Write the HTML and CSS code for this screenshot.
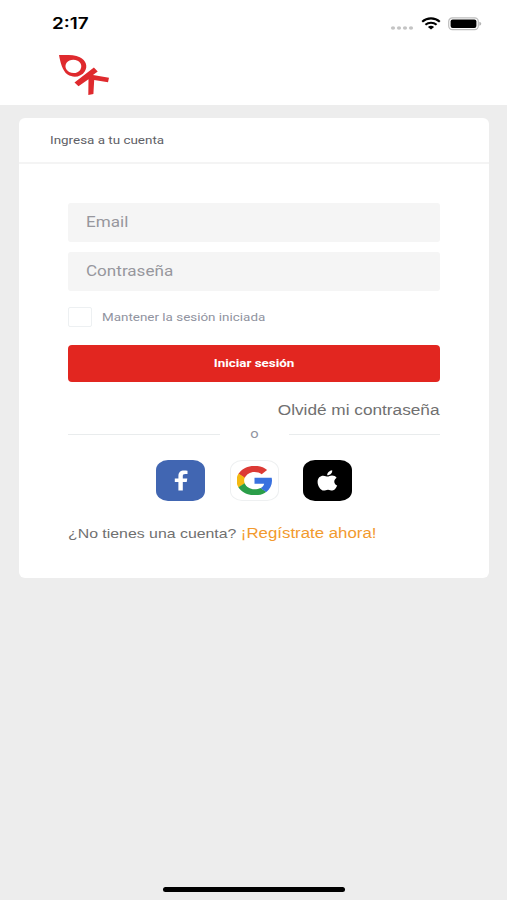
FILE: index.html
```
<!DOCTYPE html>
<html lang="es">
<head>
    <meta charset="UTF-8" />
    <meta name="viewport" content="width=device-width, initial-scale=1.0">
    <title>Ingresa a tu cuenta</title>
    <link rel="stylesheet" href="styles.css">
</head>
<body>
    <header class="header">
        <div class="status-bar">
            <span class="time wide">2:17</span>
            <div class="status-icons">
                <svg class="signal" width="24" height="4" viewBox="0 0 24 4" fill="#c4c4c4">
                    <ellipse cx="3" cy="2" rx="2.1" ry="1.8" />
                    <ellipse cx="9" cy="2" rx="2.1" ry="1.8" />
                    <ellipse cx="15" cy="2" rx="2.1" ry="1.8" />
                    <ellipse cx="21" cy="2" rx="2.1" ry="1.8" />
                </svg>
                <svg class="wifi" width="20" height="13" viewBox="0 0 20 13" fill="none" stroke="#000" stroke-width="2.1">
                    <path d="M1.2 4.7C6.2.2 13.8.2 18.8 4.7" />
                    <path d="M4.4 7.7C7.6 5 12.4 5 15.6 7.7" />
                    <path d="M6.9 9.9C8.7 8.4 11.3 8.4 13.1 9.9L10 12.5z" fill="#000" stroke="none" />
                </svg>
                <svg class="battery" width="34" height="14" viewBox="0 0 34 14">
                    <rect x=".7" y=".9" width="29.6" height="11.8" rx="3.6" fill="#fff" stroke="#bdbdbd" stroke-width="1.2" />
                    <rect x="2.6" y="2.5" width="25.8" height="8.6" rx="2" />
                    <path d="M31.3 4.8q2 .6 2 2t-2 2z" fill="#b5b5b5" />
                </svg>
            </div>
        </div>
        <svg class="logo" width="52" height="44" viewBox="0 0 52 44" fill="#df2a2e">
            <path fill-rule="evenodd" d="M1 2C8.500 2 16.500 1.600 21.800 4.200C28 7.400 30 13.300 26.900 18.200C23.300 24 15.500 25.400 9.600 21.600C4.300 17.600 2.300 9 1 2zM8.600 9.800C6.400 13 7.600 17 11.200 18.900C15 20.900 20 20.100 22.200 16.900C24.400 13.700 23.200 9.700 19.600 7.800C16 5.900 10.900 6.600 8.600 9.800z" />
            <path d="M35.900 14.600L39.700 18.400L35 22L51 24.700L50 29.300L36.200 27L35.400 41.100L30.300 42.100L30.500 26.200L20.500 33.300L16.500 29.500z" />
        </svg>
    </header>

    <main class="card">
        <div class="card-header">
            <h1 class="wide">Ingresa a tu cuenta</h1>
        </div>

        <form class="login-form">
            <label class="field"><span class="wide">Email</span></label>
            <label class="field"><span class="wide">Contraseña</span></label>

            <div class="remember">
                <span class="checkbox"></span>
                <span class="remember-text wide">Mantener la sesión iniciada</span>
            </div>

            <button type="button"><span class="wide">Iniciar sesión</span></button>

            <a class="forgot wide">Olvidé mi contraseña</a>

            <div class="divider"><span class="wide">o</span></div>

            <div class="social">
                <a class="social-btn facebook">
                    <svg width="14" height="21" viewBox="0 0 14 21" fill="#fff">
                        <path d="M4.400 20.500V12H.8V8.400H4.400V6C4.400 2.300 6.500.500 10 .500C11.600.500 13 .600 13.500.700V4H11.200C9.300 4 8.800 4.800 8.800 6.200V8.400H13.300L12.700 12H8.800V20.500z" />
                    </svg>
                </a>
                <a class="social-btn google">
                    <svg width="35" height="29" viewBox="1.600 1.600 44.800 44.800" preserveAspectRatio="none">
                        <path fill="#dc3a35" d="M24 10.900c3.500 0 6.700 1.200 9.200 3.600l6.900-6.900C35.900 3.700 30.500 1.300 24 1.300 15 1.300 7.300 6.500 3.500 14l8 6.200C13.400 14.900 18.200 10.900 24 10.900z" />
                        <path fill="#f4b912" d="M11.500 28.600C11 27.100 10.700 25.600 10.700 24s.3-3.100.8-4.600l-8-6.200C1.900 16.500 1 20.100 1 24s.9 7.500 2.500 10.800z" />
                        <path fill="#2b9e49" d="M24 46.800c6.200 0 11.400-2 15.200-5.600l-7.500-5.800c-2.100 1.400-4.700 2.200-7.700 2.200-5.900 0-10.800-4-12.600-9.300l-8 6.200C7.300 42.100 15 46.800 24 46.800z" />
                        <path fill="#3971df" d="M46.400 24.500c0-1.600-.2-3.100-.4-4.600H24v9.100h12.400c-.5 2.900-2.100 5.300-4.700 6.900l7.500 5.800c4.400-4.100 7.200-10.100 7.200-17.200z" />
                    </svg>
                </a>
                <a class="social-btn apple">
                    <svg width="21" height="21" viewBox="0 0 21 21" fill="#fff">
                        <path d="M15.200.300C15.500 3 13.300 5.300 10.200 5.300C10 2.900 12.300.700 15.200.300z" />
                        <path d="M10.600 6.600C11.800 6.600 13 5.500 15 5.500C17 5.500 18.700 6.300 19.600 7.700C16.200 9.800 16.700 14.200 20.200 15.500C19.400 17.400 17.600 20.500 15.300 20.500C13.700 20.500 12.900 19.700 11 19.700C9.200 19.700 8.300 20.500 6.800 20.500C3.600 20.500.600 15.800.600 11.900C.600 7.900 3.200 5.700 6.200 5.700C8.300 5.700 9.600 6.600 10.600 6.600z" />
                    </svg>
                </a>
            </div>

            <p class="register"><span class="wide">¿No tienes una cuenta? <a>¡Regístrate ahora!</a></span></p>
        </form>
    </main>

    <footer class="home-bar"></footer>
</body>
</html>
```
FILE: styles.css
```
* {
    box-sizing: border-box;
}

body {
    margin: 0;
    height: 900px;
    display: flex;
    flex-direction: column;
    background-color: #ededed;
    font-family: Roboto, sans-serif;
    overflow: hidden;
}

/* Texto ensanchado */
.wide {
    display: inline-block;
    transform: scaleX(1.22);
    transform-origin: left center;
    white-space: nowrap;
}

.header {
    height: 105px;
    background-color: white;
}

.status-bar {
    height: 47px;
    padding: 0 25px 0 52px;
    display: flex;
    justify-content: space-between;
    align-items: center;
}

.time {
    font-family: Inter, sans-serif;
    font-size: 15.5px;
    font-weight: 600;
    color: #000;
}

.status-icons {
    display: flex;
    align-items: center;
}

.signal {
    margin: 8px 7px 0 0;
}

.wifi {
    margin-right: 7px;
}

.logo {
    display: block;
    margin: 6px 0 0 58px;
}

.card {
    width: 470px;
    height: 460px;
    margin: 13px 0 0 19px;
    background-color: white;
    border-radius: 6px;
}

.card-header {
    height: 46px;
    padding: 1px 0 0 31px;
    display: flex;
    align-items: center;
    border-bottom: 2px solid #f4f4f4;
}

h1 {
    margin: 0;
    font-size: 11px;
    font-weight: 400;
    color: #606066;
}

.login-form {
    padding: 39px 49px 0;
    display: flex;
    flex-direction: column;
}

.field {
    height: 39px;
    margin-bottom: 10px;
    padding: 0 0 2px 18px;
    display: flex;
    align-items: center;
    background-color: #f5f5f5;
    border-radius: 3px;
    font-size: 14px;
    color: #97979d;
}

.remember {
    height: 21px;
    margin-top: 6px;
    display: flex;
    align-items: center;
    gap: 10px;
}

.checkbox {
    width: 24px;
    height: 20px;
    margin-bottom: 1px;
    border: 1px solid #edf0f2;
    border-radius: 2px;
}

.remember-text {
    font-size: 11px;
    color: #9093a0;
}

button {
    height: 37px;
    margin-top: 17px;
    padding: 0;
    border: none;
    border-radius: 4px;
    background-color: #e22620;
    color: white;
    font-family: Roboto, sans-serif;
    font-size: 11px;
    font-weight: 700;
}

button .wide,
.divider .wide {
    transform-origin: center;
}

.forgot {
    align-self: flex-end;
    margin-top: 19px;
    font-family: "Liberation Sans", Arial, sans-serif;
    font-size: 14px;
    line-height: 18px;
    color: #707070;
    transform: scaleX(1.23);
    transform-origin: right center;
}

.divider {
    height: 16px;
    margin-top: 7px;
    display: flex;
    align-items: center;
    font-size: 12px;
    color: #9093a0;
}

.divider::before,
.divider::after {
    content: "";
    flex: 1;
    height: 1px;
    background-color: #e9eced;
}

.divider .wide {
    width: 69px;
    text-align: center;
}

.social {
    margin-top: 18px;
    display: flex;
    justify-content: center;
    gap: 24.5px;
}

.social-btn {
    width: 49px;
    height: 41px;
    display: flex;
    justify-content: center;
    align-items: center;
    border-radius: 12px / 10px;
}

.facebook {
    background-color: #4166b2;
}

.google {
    border: 1px solid #eef0f1;
}

.apple {
    background-color: #000;
}

.register {
    margin: 23px 0 0;
    font-family: "Liberation Sans", Arial, sans-serif;
    font-size: 13px;
    line-height: 19px;
    color: #707070;
}

.register a {
    font-size: 13.8px;
    color: #f29a2e;
}

.home-bar {
    width: 182px;
    height: 5px;
    margin: auto auto 8px;
    border-radius: 3px;
    background-color: #000;
}
```
